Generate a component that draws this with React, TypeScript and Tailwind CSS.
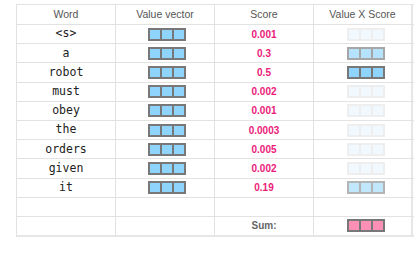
import clsx from 'clsx';

// Attention table: each word's value vector, its softmax score, and the
// weighted vector (value x score). Faded boxes mean a tiny weight.

interface Row {
  word: string;
  score: string;
  weight: string; // opacity class for the weighted vector
}

const ROWS: Row[] = [
  { word: '<s>', score: '0.001', weight: 'opacity-[0.12]' },
  { word: 'a', score: '0.3', weight: 'opacity-[0.65]' },
  { word: 'robot', score: '0.5', weight: 'opacity-100' },
  { word: 'must', score: '0.002', weight: 'opacity-[0.12]' },
  { word: 'obey', score: '0.001', weight: 'opacity-[0.12]' },
  { word: 'the', score: '0.0003', weight: 'opacity-[0.12]' },
  { word: 'orders', score: '0.005', weight: 'opacity-[0.12]' },
  { word: 'given', score: '0.002', weight: 'opacity-[0.12]' },
  { word: 'it', score: '0.19', weight: 'opacity-[0.55]' },
];

const COLS = ['w-[99px]', 'w-[99px]', 'w-[99px]', 'w-[99px]'];

function VectorBox({ fill = 'bg-[#8fd4fc]', className }: { fill?: string; className?: string }) {
  return (
    <div
      className={clsx(
        'flex h-[13px] w-[38px] gap-[2px] border-2 border-[#787878] bg-[#787878]',
        className,
      )}
    >
      <div className={clsx('flex-1', fill)} />
      <div className={clsx('flex-1', fill)} />
      <div className={clsx('flex-1', fill)} />
    </div>
  );
}

function Cell({ i, children, className }: { i: number; children?: React.ReactNode; className?: string }) {
  return (
    <div
      className={clsx(
        'flex h-full items-center justify-center border-r border-[#e2e2e2]',
        COLS[i],
        i === 3 && 'border-r-2 border-r-[#e6e6e6]',
        className,
      )}
    >
      {children}
    </div>
  );
}

const mono = "font-['DejaVu_Sans_Mono',monospace] text-[11.5px] text-[#222]";
const sans = "font-['Liberation_Sans',Arial,sans-serif]";

export default function App() {
  return (
    <div className="h-[256px] w-[418px] bg-white pl-[16px] pt-[4px]">
      <div className="w-[398px] border-b-2 border-l border-t border-[#e2e2e2] border-b-[#e6e6e6]">
        <div className={clsx('flex h-[20px] border-b border-[#e2e2e2] text-[10.5px] text-[#555]', sans)}>
          <Cell i={0}>Word</Cell>
          <Cell i={1}>Value vector</Cell>
          <Cell i={2}>Score</Cell>
          <Cell i={3}>Value X Score</Cell>
        </div>

        {ROWS.map((r) => (
          <div key={r.word} className="flex h-[19.2px] border-b border-[#e2e2e2]">
            <Cell i={0} className={mono}>
              {r.word}
            </Cell>
            <Cell i={1}>
              <VectorBox className="ml-[3px]" />
            </Cell>
            <Cell i={2} className={clsx('text-[10px] font-bold text-[#ec1a78]', sans)}>
              {r.score}
            </Cell>
            <Cell i={3}>
              <VectorBox className={clsx('ml-[7px]', r.weight)} />
            </Cell>
          </div>
        ))}

        <div className="flex h-[19.2px] border-b border-[#e2e2e2]">
          <Cell i={0} />
          <Cell i={1} />
          <Cell i={2} />
          <Cell i={3} />
        </div>

        <div className="flex h-[18.2px]">
          <Cell i={0} />
          <Cell i={1} />
          <Cell i={2} className={clsx('text-[10px] font-bold text-[#666]', sans)}>
            Sum:
          </Cell>
          <Cell i={3}>
            <VectorBox fill="bg-[#fc8fb5]" className="ml-[7px]" />
          </Cell>
        </div>
      </div>
    </div>
  );
}
